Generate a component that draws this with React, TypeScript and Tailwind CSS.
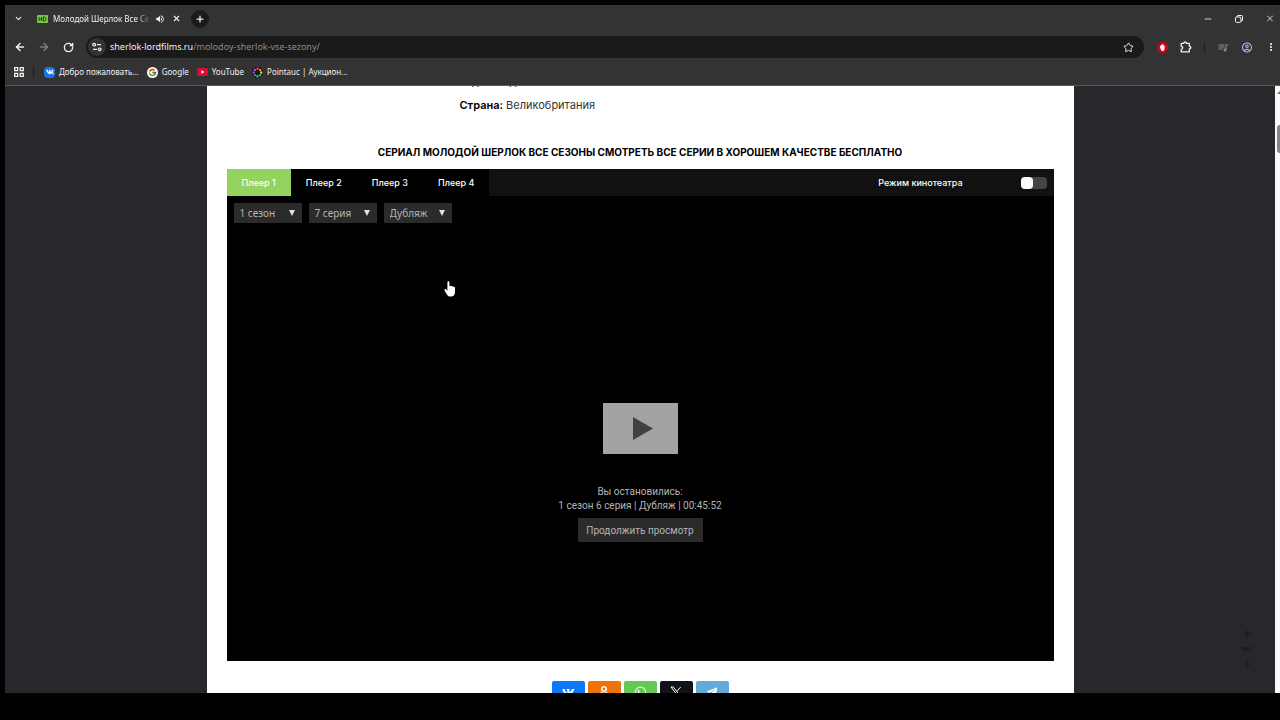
import type { ReactNode } from "react"
import { ArrowDown, ArrowLeft, ArrowRight, ArrowUp, ChevronDown, Minus, Plus, RotateCw, Star, X } from "lucide-react"
import { FaOdnoklassniki, FaTelegramPlane, FaVk, FaWhatsapp } from "react-icons/fa"
import { FcGoogle } from "react-icons/fc"
import { MdMoreVert, MdOutlineAccountCircle, MdOutlineQueueMusic, MdVolumeUp } from "react-icons/md"

const players = ["Плеер 1", "Плеер 2", "Плеер 3", "Плеер 4"]

const filters = [
    { label: "Сезон", value: "1 сезон" },
    { label: "Серия", value: "7 серия" },
    { label: "Озвучка", value: "Дубляж" },
]

const dots = [
    { x: 8, y: 2.6, color: "#e8484f" },
    { x: 11.8, y: 4.2, color: "#f08a24" },
    { x: 13.4, y: 8, color: "#e9d538" },
    { x: 11.8, y: 11.8, color: "#5ec746" },
    { x: 8, y: 13.4, color: "#2fc4a2" },
    { x: 4.2, y: 11.8, color: "#3796e8" },
    { x: 2.6, y: 8, color: "#7b5be0" },
    { x: 4.2, y: 4.2, color: "#d44fc0" },
]

function IconButton({ label, className = "", children }: { label: string; className?: string; children: ReactNode }) {
    return (
        <button type="button" aria-label={label} className={`flex shrink-0 items-center justify-center ${className}`}>
            {children}
        </button>
    )
}

function Bookmark({ icon, children }: { icon: ReactNode; children: ReactNode }) {
    return (
        <a href="#" className="flex items-center gap-1 whitespace-nowrap">
            {icon}
            <span>{children}</span>
        </a>
    )
}

function BrowserHeader() {
    return (
        <header className="flex h-[81px] shrink-0 flex-col border-b border-[#58585a] bg-[#333334] font-['Noto_Sans','Open_Sans',sans-serif] text-[8px] text-[#f2f2f2]">
            {/* Tabs */}
            <div className="flex h-[27px] items-center">
                <IconButton label="Поиск вкладок" className="w-[26px]">
                    <ChevronDown size={9} strokeWidth={3} />
                </IconButton>
                <div className="ml-[6px] flex items-center">
                    <svg width="11" height="8" viewBox="0 0 11 8" aria-hidden="true">
                        <rect width="11" height="8" rx="1" fill="#78c944" />
                        <path d="M2 2v4M4.6 2v4M2 4h2.6M6.4 2v4h1c2.2 0 2.2-4 0-4z" fill="none" stroke="#26401b" strokeWidth="1" />
                    </svg>
                    <span className="ml-[5px] w-[98px] overflow-hidden whitespace-nowrap [mask-image:linear-gradient(to_right,black_85%,transparent)]">
                        Молодой Шерлок Все Сезоны
                    </span>
                    <IconButton label="Отключить звук" className="ml-1 w-[10px]">
                        <MdVolumeUp size={10} />
                    </IconButton>
                    <IconButton label="Закрыть вкладку" className="ml-[6px] w-[10px]">
                        <X size={9} strokeWidth={3} />
                    </IconButton>
                </div>
                <IconButton label="Новая вкладка" className="ml-[10px] size-[18px] rounded-full bg-[#1b1b1c]">
                    <Plus size={10} strokeWidth={3} />
                </IconButton>
                <div className="ml-auto flex items-center gap-5 pr-[5px]">
                    <IconButton label="Свернуть" className="w-[10px]">
                        <Minus size={10} strokeWidth={2} />
                    </IconButton>
                    <IconButton label="Восстановить" className="w-[12px]">
                        <svg width="8" height="8" viewBox="0 0 8 8" fill="none" stroke="currentColor" aria-hidden="true">
                            <rect x="0.5" y="2" width="5.4" height="5.4" rx="1" />
                            <path d="M2.2 2V1.3q0-.8.8-.8h3.7q.8 0 .8.8v3.8q0 .8-.8.8H6" />
                        </svg>
                    </IconButton>
                    <IconButton label="Закрыть" className="w-[10px]">
                        <X size={11} strokeWidth={2} />
                    </IconButton>
                </div>
            </div>

            {/* Address bar */}
            <div className="flex h-[30px] items-center">
                <IconButton label="Назад" className="w-[30px]">
                    <ArrowLeft size={12} strokeWidth={3} />
                </IconButton>
                <IconButton label="Вперёд" className="w-[18px] text-[#7c7c7d]">
                    <ArrowRight size={12} strokeWidth={3} />
                </IconButton>
                <IconButton label="Обновить" className="w-[30px]">
                    <RotateCw size={11} strokeWidth={3} />
                </IconButton>
                <div className="ml-[3px] flex h-[22px] flex-1 items-center rounded-full bg-[#1a1a1b] px-[2px]">
                    <IconButton label="Сведения о сайте" className="size-[18px] rounded-full bg-[#333334]">
                        <svg width="10" height="10" viewBox="0 0 10 10" fill="none" stroke="currentColor" strokeWidth="1.2" aria-hidden="true">
                            <circle cx="2.2" cy="2.7" r="1.3" />
                            <path d="M5 2.7h4M1 7.3h4" />
                            <circle cx="7.8" cy="7.3" r="1.3" />
                        </svg>
                    </IconButton>
                    <span className="ml-1 flex-1 text-[9px] text-[#8a8a8b]">
                        <span className="text-[#f2f2f2]">sherlok-lordfilms.ru</span>/molodoy-sherlok-vse-sezony/
                    </span>
                    <IconButton label="Добавить в закладки" className="mr-2 w-3">
                        <Star size={11} strokeWidth={2} />
                    </IconButton>
                </div>
                <div className="flex items-center pr-[3px] pl-3">
                    <IconButton label="Блокировщик рекламы" className="w-3">
                        <svg width="11" height="11" viewBox="0 0 12 12" aria-hidden="true">
                            <path d="M3.6 0h4.8L12 3.6v4.8L8.4 12H3.6L0 8.4V3.6z" fill="#c4061b" />
                            <path d="M3.4 6.2V4.1h1V3h1v-.6h1V3h1v1h.9v3.3L7.2 9.8H5.1z" fill="#fff" />
                        </svg>
                    </IconButton>
                    <IconButton label="Расширения" className="ml-3 w-3">
                        <svg width="12" height="12" viewBox="0 0 12 12" fill="none" stroke="currentColor" strokeWidth="1.3" aria-hidden="true">
                            <path d="M1.2 2.4h2.6c0-2 2.6-2 2.6 0h2.9v2.8c2 0 2 2.6 0 2.6v3H1.2V8.3c2 0 2-3 0-3z" strokeLinejoin="round" />
                        </svg>
                    </IconButton>
                    <span className="ml-3 h-[10px] w-px bg-[#1c1c1d]" />
                    <IconButton label="Управление медиа" className="ml-3 w-3 text-[#8a8a8b]">
                        <MdOutlineQueueMusic size={13} />
                    </IconButton>
                    <IconButton label="Профиль" className="ml-3 w-3 text-[#a9b7e8]">
                        <MdOutlineAccountCircle size={13} />
                    </IconButton>
                    <IconButton label="Меню" className="ml-3 w-3">
                        <MdMoreVert size={14} />
                    </IconButton>
                </div>
            </div>

            {/* Bookmarks */}
            <nav className="flex h-5 items-center">
                <IconButton label="Приложения" className="ml-2 w-[11px]">
                    <svg width="10" height="10" viewBox="0 0 10 10" fill="none" stroke="currentColor" strokeWidth="1.3" aria-hidden="true">
                        <path d="M.7.7h3v3h-3zM6.3.7h3v3h-3zM.7 6.3h3v3h-3zM6.3 6.3h3v3h-3z" />
                    </svg>
                </IconButton>
                <span className="ml-[9px] h-[10px] w-px bg-[#1c1c1d]" />
                <div className="ml-[10px] flex items-center gap-2">
                    <Bookmark
                        icon={
                            <span className="flex size-[11px] items-center justify-center rounded-sm bg-[#1478e6] text-white">
                                <FaVk size={8} />
                            </span>
                        }
                    >
                        Добро пожаловать...
                    </Bookmark>
                    <Bookmark
                        icon={
                            <span className="flex size-[11px] items-center justify-center rounded-full bg-white">
                                <FcGoogle size={9} />
                            </span>
                        }
                    >
                        Google
                    </Bookmark>
                    <Bookmark
                        icon={
                            <svg width="11" height="8" viewBox="0 0 11 8" aria-hidden="true">
                                <rect width="11" height="8" rx="2" fill="#e00b34" />
                                <path d="M4.4 2.3v3.4L7.3 4z" fill="#fff" />
                            </svg>
                        }
                    >
                        YouTube
                    </Bookmark>
                    <Bookmark
                        icon={
                            <svg width="11" height="11" viewBox="0 0 16 16" aria-hidden="true">
                                <circle cx="8" cy="8" r="8" fill="#161616" />
                                {dots.map((dot) => (
                                    <circle key={dot.color} cx={dot.x} cy={dot.y} r="1.7" fill={dot.color} />
                                ))}
                            </svg>
                        }
                    >
                        Pointauc | Аукцион...
                    </Bookmark>
                </div>
            </nav>
        </header>
    )
}

function Player() {
    return (
        <section className="bg-black">
            <div className="flex h-[27px] items-center bg-[#111111] text-[9px] font-medium text-white">
                <div className="flex h-full bg-black">
                    {players.map((player, index) => (
                        <button
                            key={player}
                            type="button"
                            className={index === 0 ? "bg-[#93d35e] px-[15px]" : "px-[15px]"}
                        >
                            {player}
                        </button>
                    ))}
                </div>
                <label htmlFor="cinema" className="ml-auto">
                    Режим кинотеатра
                </label>
                <input
                    id="cinema"
                    type="checkbox"
                    className="mr-[7px] ml-[58px] h-3 w-[26px] appearance-none rounded-sm bg-[#444444] before:block before:size-3 before:rounded-sm before:bg-white checked:before:ml-auto"
                />
            </div>

            <div className="flex aspect-video flex-col text-[10px] text-[#b4b4b4]">
                <div className="flex gap-[7px] px-[7px] pt-[7px] font-['Noto_Sans','Open_Sans',sans-serif]">
                    {filters.map((filter) => (
                        <div key={filter.label} className="relative">
                            <select
                                aria-label={filter.label}
                                className="block h-5 w-[68px] appearance-none bg-[#2b2b2b] pl-[6px]"
                            >
                                <option>{filter.value}</option>
                            </select>
                            <svg className="pointer-events-none absolute top-[7px] right-[7px]" width="6" height="6" viewBox="0 0 6 6" aria-hidden="true">
                                <path d="M0 0h6L3 6z" fill="#e2e2e2" />
                            </svg>
                        </div>
                    ))}
                </div>

                {/* Resume block */}
                <div className="mt-[180px] flex flex-col items-center font-[Roboto,sans-serif]">
                    <button type="button" aria-label="Смотреть" className="flex h-[51px] w-[75px] items-center justify-center bg-[#a3a3a1]">
                        <svg width="20" height="23" viewBox="0 0 20 23" className="ml-[6px]" aria-hidden="true">
                            <path d="M0 0l20 11.5L0 23z" fill="#414141" />
                        </svg>
                    </button>
                    <p className="mt-[31px] text-center leading-[14px]">
                        Вы остановились:
                        <br />1 сезон 6 серия | Дубляж | 00:45:52
                    </p>
                    <button type="button" className="mt-[5px] h-6 w-[125px] bg-[#2b2b2b]">
                        Продолжить просмотр
                    </button>
                </div>
            </div>
        </section>
    )
}

function ShareLinks() {
    return (
        <div className="mt-5 flex justify-center gap-[3px] text-white">
            <a href="#" aria-label="ВКонтакте" className="flex h-[22px] w-[33px] items-center justify-center rounded-xs bg-[#0d78f8]">
                <FaVk size={13} />
            </a>
            <a href="#" aria-label="Одноклассники" className="flex h-[22px] w-[33px] items-center justify-center rounded-xs bg-[#ee7208]">
                <FaOdnoklassniki size={12} />
            </a>
            <a href="#" aria-label="WhatsApp" className="flex h-[22px] w-[33px] items-center justify-center rounded-xs bg-[#65c855]">
                <FaWhatsapp size={13} />
            </a>
            <a href="#" aria-label="X" className="flex h-[22px] w-[33px] items-center justify-center rounded-xs bg-[#0f1419]">
                <svg width="12" height="12" viewBox="0 0 12 12" fill="none" stroke="currentColor" aria-hidden="true">
                    <path d="M1 1h2.3L11 11H8.7zM10.7 1L6.9 5.2M5.2 6.9L1.3 11" />
                </svg>
            </a>
            <a href="#" aria-label="Telegram" className="flex h-[22px] w-[33px] items-center justify-center rounded-xs bg-[#64a9dc]">
                <FaTelegramPlane size={12} />
            </a>
        </div>
    )
}

export default function App() {
    return (
        <div className="flex h-screen flex-col bg-black pt-[5px] pb-[27px] pl-[5px]">
            <BrowserHeader />
            <div className="relative flex min-h-0 flex-1 overflow-hidden bg-[#26282b]">
                <main className="h-full min-w-0 flex-1 overflow-hidden font-[Inter,sans-serif]">
                    <div className="mx-auto min-h-full max-w-[867px] bg-white px-5 text-black">
                        <div className="-mt-3 pl-[233px] text-[11px] leading-[15px]">
                            <p>
                                <b className="font-semibold">Год выхода:</b>
                            </p>
                            <p className="mt-[9px]">
                                <b className="font-semibold">Страна:</b> <span className="text-[#333333]">Великобритания</span>
                            </p>
                        </div>
                        <h2 className="mt-8 mb-[9px] text-center text-[10px] leading-[15px] font-bold uppercase">
                            Сериал Молодой Шерлок Все Сезоны смотреть все серии в хорошем качестве бесплатно
                        </h2>
                        <Player />
                        <ShareLinks />
                    </div>
                </main>

                {/* Scrollbar */}
                <div className="flex w-[5px] shrink-0 flex-col items-end bg-[#fafafa]">
                    <svg className="mt-[5px]" width="3" height="3" viewBox="0 0 3 3" aria-hidden="true">
                        <path d="M0 3l3-3v3z" fill="#6b6b6b" />
                    </svg>
                    <div className="mt-[31px] h-7 w-[3px] rounded-l-sm bg-[#858585]" />
                </div>

                {/* Page scroll buttons */}
                <div className="absolute right-[27px] bottom-6 flex flex-col items-center gap-[6px] text-[#131517]">
                    <IconButton label="Наверх">
                        <ArrowUp size={12} />
                    </IconButton>
                    <span className="h-1 w-[10px] bg-[#1d1f22]" />
                    <IconButton label="Вниз">
                        <ArrowDown size={12} />
                    </IconButton>
                </div>
            </div>

            {/* Hand pointer */}
            <svg className="pointer-events-none absolute top-[281px] left-[444px]" width="12" height="16" viewBox="0 0 12 16" aria-hidden="true">
                <path
                    d="M3.4 1.4c0-1.6 2-1.6 2 0v4c.3-.9 1.7-.8 1.9.2.4-.8 1.7-.6 1.8.4.5-.7 1.9-.4 1.9.8v4.1c0 2.9-1.6 4.6-4.2 4.6-2.3 0-3.2-.9-4.2-2.6L.6 9.7c-.7-1.4.8-2.2 1.7-1.1l1.1 1.2z"
                    fill="#fff"
                />
            </svg>
        </div>
    )
}
